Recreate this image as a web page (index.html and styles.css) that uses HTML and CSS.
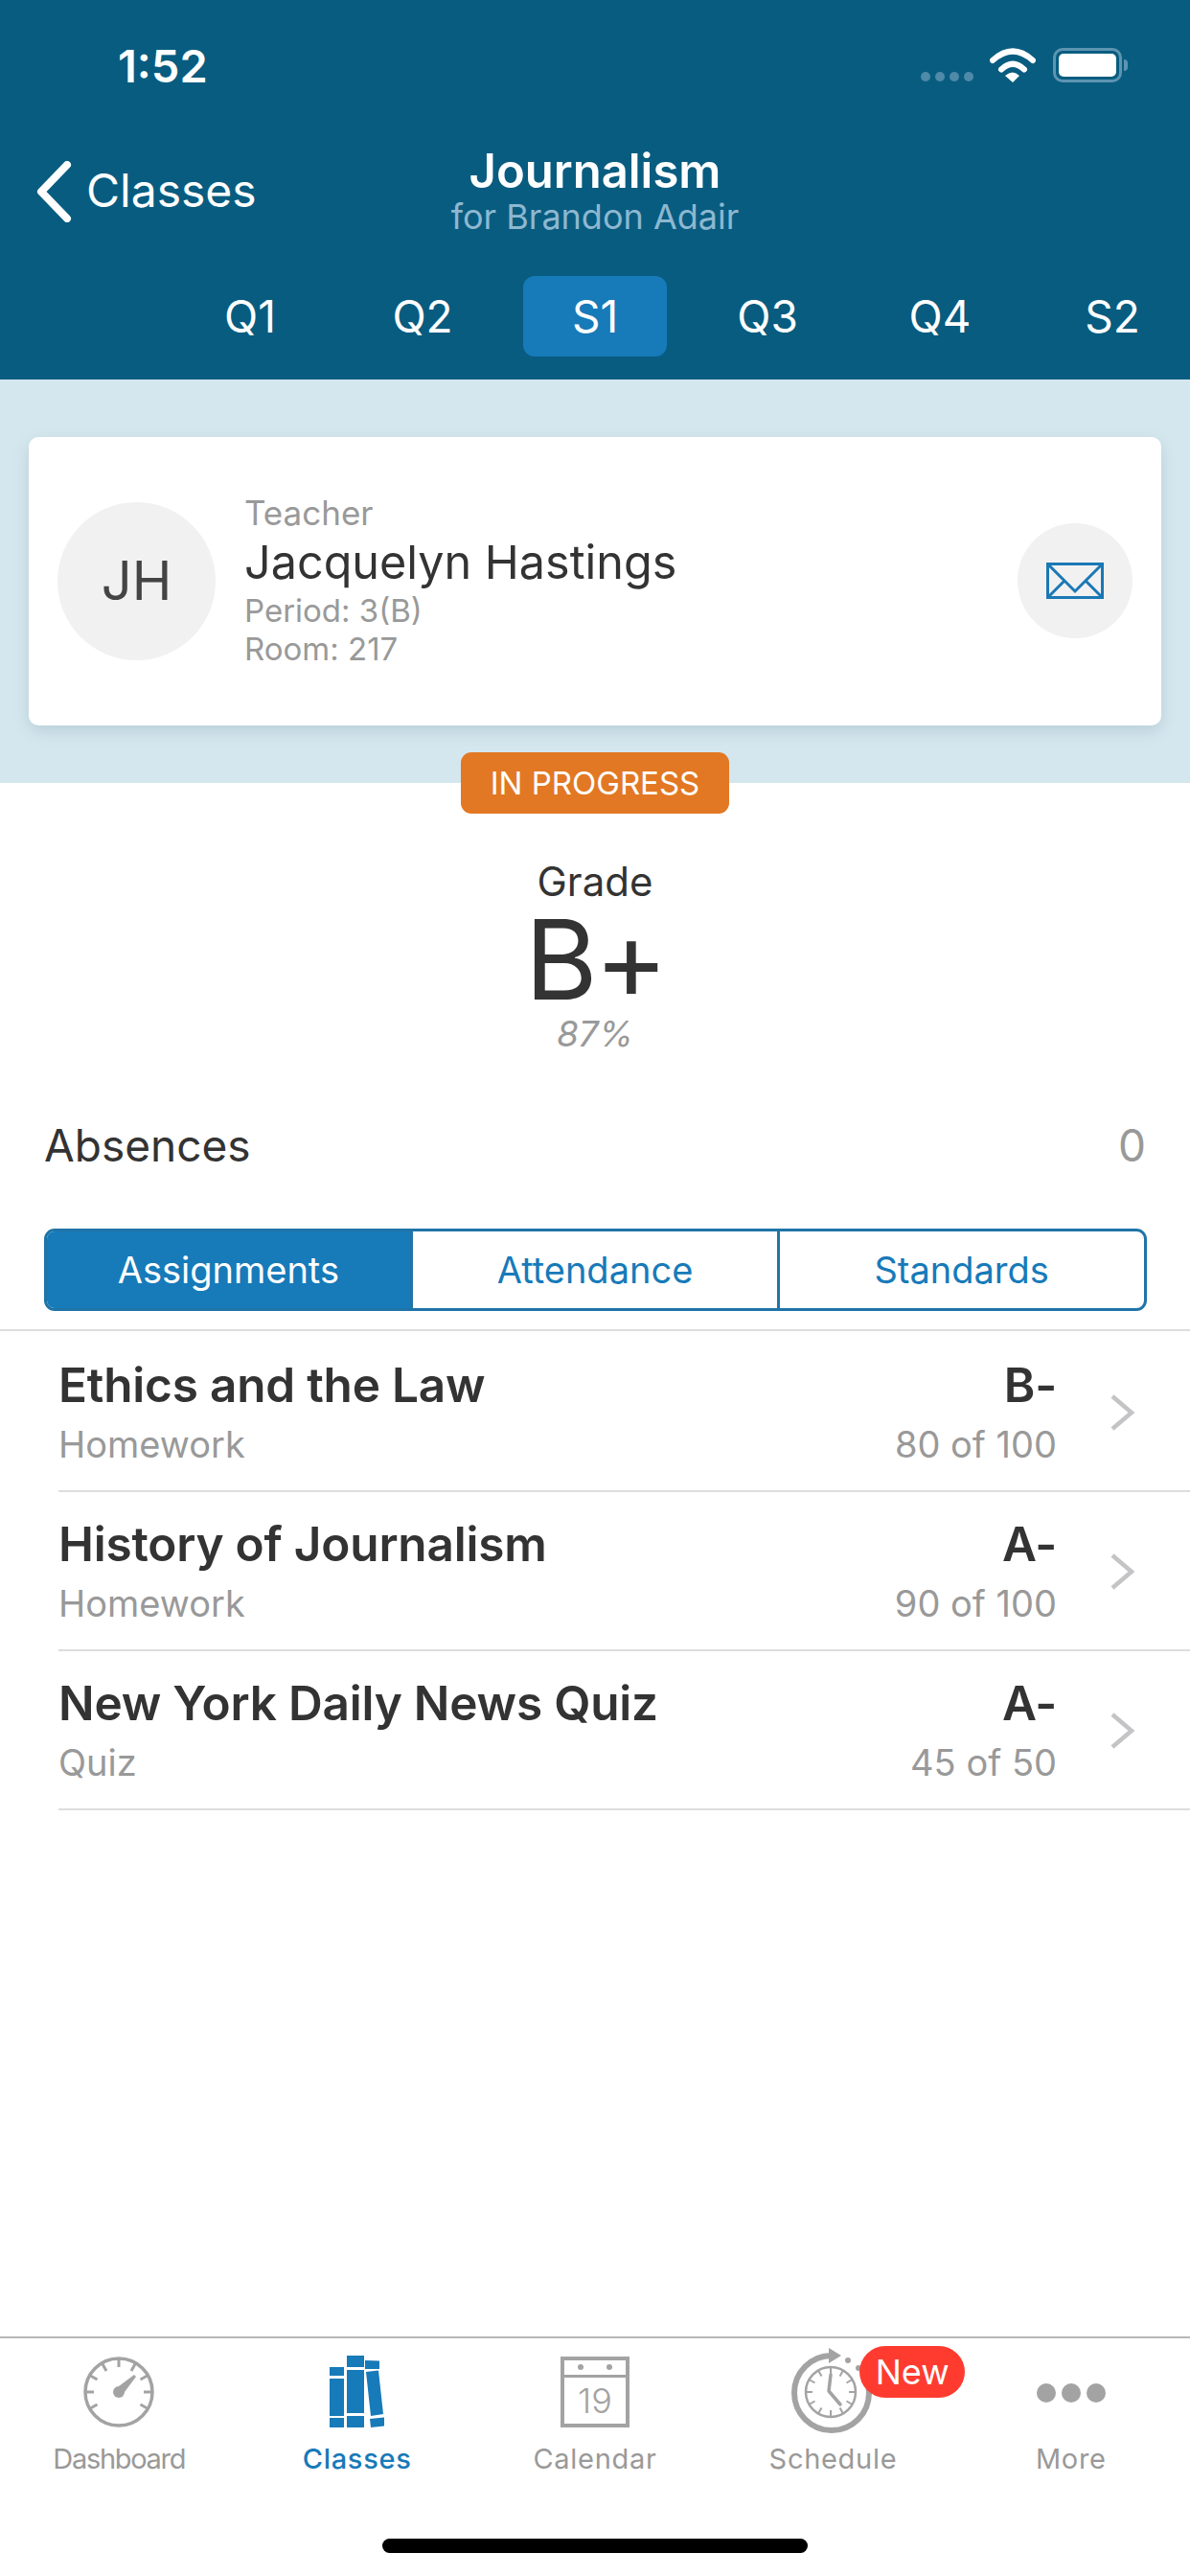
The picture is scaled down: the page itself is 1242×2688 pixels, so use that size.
FILE: index.html
```html
<!DOCTYPE html>
<html lang="en">
  <head>
    <meta charset="UTF-8" />
    <meta name="viewport" content="width=device-width, initial-scale=1.0" />
    <title>Journalism</title>
    <link rel="stylesheet" href="styles.css">
  </head>
  <body>
    <div class="page">
      <div class="header">
        <div class="status">
          <span class="time">1:52</span>
          <div class="status-icons">
            <div class="signal"><i></i><i></i><i></i><i></i></div>
            <svg class="wifi" width="48" height="36" viewBox="0 0 48 36">
              <path d="M3 13Q24 -6 45 13" fill="none" stroke="#fff" stroke-width="6" stroke-linecap="round"/>
              <path d="M12 22.500Q24 11 36 22.500" fill="none" stroke="#fff" stroke-width="6" stroke-linecap="round"/>
              <path d="M16 29Q24 22 31 29L24 36Z" fill="#fff"/>
            </svg>
            <div class="battery"><div class="battery-fill"></div></div>
            <div class="battery-nub"></div>
          </div>
        </div>
        <div class="nav">
          <div class="back">
            <svg width="38" height="64" viewBox="0 0 38 64">
              <path d="M33 4L6 32L33 60" fill="none" stroke="#fff" stroke-width="8" stroke-linecap="round" stroke-linejoin="round"/>
            </svg>
            <span>Classes</span>
          </div>
          <div class="title">
            <div class="title-main">Journalism</div>
            <div class="title-sub">for Brandon Adair</div>
          </div>
        </div>
        <div class="periods">
          <div class="period">Q1</div>
          <div class="period">Q2</div>
          <div class="period active">S1</div>
          <div class="period">Q3</div>
          <div class="period">Q4</div>
          <div class="period">S2</div>
        </div>
      </div>

      <div class="teacher-area">
        <div class="card">
          <div class="avatar">JH</div>
          <div class="teacher-info">
            <div class="teacher-label">Teacher</div>
            <div class="teacher-name">Jacquelyn Hastings</div>
            <div class="teacher-meta">Period: 3(B)</div>
            <div class="teacher-meta">Room: 217</div>
          </div>
          <div class="mail">
            <svg width="60" height="38" viewBox="0 0 60 38">
              <rect x="1.500" y="1.500" width="57" height="35" fill="none" stroke="#1a78b5" stroke-width="3"/>
              <path d="M2 2L30 30L58 2M2 36L19 19M58 36L41 19" fill="none" stroke="#1a78b5" stroke-width="3"/>
            </svg>
          </div>
        </div>
      </div>

      <div class="main">
        <div class="badge">IN PROGRESS</div>
        <div class="grade-label">Grade</div>
        <div class="grade">B+</div>
        <div class="percent">87%</div>
        <div class="absences">
          <span>Absences</span>
          <span class="absences-count">0</span>
        </div>
        <div class="segments">
          <div class="segment active">Assignments</div>
          <div class="segment">Attendance</div>
          <div class="segment">Standards</div>
        </div>

        <div class="list">
          <div class="row">
            <div class="row-left">
              <div class="row-title">Ethics and the Law</div>
              <div class="row-sub">Homework</div>
            </div>
            <div class="row-right">
              <div class="row-title">B-</div>
              <div class="row-sub">80 of 100</div>
            </div>
            <svg class="chevron" width="28" height="40" viewBox="0 0 28 40">
              <path d="M4 3L24 20L4 37" fill="none" stroke="#c4c4c7" stroke-width="4.500"/>
            </svg>
          </div>
          <div class="row">
            <div class="row-left">
              <div class="row-title">History of Journalism</div>
              <div class="row-sub">Homework</div>
            </div>
            <div class="row-right">
              <div class="row-title">A-</div>
              <div class="row-sub">90 of 100</div>
            </div>
            <svg class="chevron" width="28" height="40" viewBox="0 0 28 40">
              <path d="M4 3L24 20L4 37" fill="none" stroke="#c4c4c7" stroke-width="4.500"/>
            </svg>
          </div>
          <div class="row">
            <div class="row-left">
              <div class="row-title">New York Daily News Quiz</div>
              <div class="row-sub">Quiz</div>
            </div>
            <div class="row-right">
              <div class="row-title">A-</div>
              <div class="row-sub">45 of 50</div>
            </div>
            <svg class="chevron" width="28" height="40" viewBox="0 0 28 40">
              <path d="M4 3L24 20L4 37" fill="none" stroke="#c4c4c7" stroke-width="4.500"/>
            </svg>
          </div>
        </div>
      </div>

      <div class="tabbar">
        <div class="tabs">
          <div class="tab">
            <svg width="74" height="76" viewBox="0 0 74 76">
              <circle cx="37" cy="38" r="35" fill="none" stroke="#a3a3a3" stroke-width="3.500"/>
              <path d="M37 3V12M19.500 8L24 16M54.500 8L50 16M6.500 20.500L14.500 25M67.500 20.500L59.500 25M2 38H11M72 38H63M6.500 55.500L14.500 51M67.500 55.500L59.500 51" stroke="#a3a3a3" stroke-width="3"/>
              <circle cx="37" cy="38" r="6" fill="#a3a3a3"/>
              <path d="M33 35L53 20L55 22L40 42Z" fill="#a3a3a3"/>
            </svg>
            <span class="tab-label tab-label-tight">Dashboard</span>
          </div>
          <div class="tab tab-on">
            <svg width="58" height="76" viewBox="0 0 58 76">
              <path d="M0 12H15V21H0ZM0 24H15V63H0ZM0 65H15V75H0ZM18 0H36V12H18ZM18 15H36V60H18ZM18 63H36V75H18Z" fill="#177ab9"/>
              <path d="M37 5L52 5.500L52 14L37 14ZM38 17L51 15.500L56 61L43 63ZM42 66L57 64.500L57 73.500L43 75Z" fill="#177ab9"/>
            </svg>
            <span class="tab-label">Classes</span>
          </div>
          <div class="tab">
            <svg class="cal-icon" width="72" height="74" viewBox="0 0 72 74">
              <rect x="2" y="2" width="68" height="70" fill="none" stroke="#a3a3a3" stroke-width="4"/>
              <path d="M2 20.500H70" stroke="#a3a3a3" stroke-width="3"/>
              <circle cx="21" cy="11" r="3" fill="#a3a3a3"/>
              <circle cx="51" cy="11" r="3" fill="#a3a3a3"/>
              <text x="36" y="59" class="cal-day" text-anchor="middle">19</text>
            </svg>
            <span class="tab-label">Calendar</span>
          </div>
          <div class="tab">
            <svg class="clock-icon" width="90" height="90" viewBox="0 0 90 90">
              <path d="M44 8A39 39 0 1 0 83 47A39 39 0 0 0 78 28" fill="none" stroke="#a3a3a3" stroke-width="6"/>
              <path d="M41 0L54 8L41 16Z" fill="#a3a3a3"/>
              <circle cx="61" cy="13" r="3" fill="#a3a3a3"/>
              <circle cx="72" cy="21" r="3" fill="#a3a3a3"/>
              <circle cx="43" cy="46" r="26" fill="none" stroke="#a3a3a3" stroke-width="2.500"/>
              <path d="M43 20V27M43 72V65M17 46H24M69 46H62M30 23.500L33.500 29.500M56 23.500L52.500 29.500M30 68.500L33.500 62.500M56 68.500L52.500 62.500M20.500 33L26.500 36.500M65.500 33L59.500 36.500M20.500 59L26.500 55.500M65.500 59L59.500 55.500" stroke="#a3a3a3" stroke-width="2"/>
              <path d="M43 28L41 45L53 59" fill="none" stroke="#a3a3a3" stroke-width="3.500" stroke-linecap="round" stroke-linejoin="round"/>
            </svg>
            <span class="tab-label">Schedule</span>
            <span class="tab-new">New</span>
          </div>
          <div class="tab">
            <div class="more-dots"><i></i><i></i><i></i></div>
            <span class="tab-label">More</span>
          </div>
        </div>
        <div class="home-bar"></div>
      </div>
    </div>
  </body>
</html>
```

FILE: styles.css
```css
* {
  box-sizing: border-box;
}
body {
  margin: 0;
  font-family: Inter, "Liberation Sans", sans-serif;
  color: #333;
  background: #fff;
}
.page {
  width: 1242px;
  height: 2688px;
  display: flex;
  flex-direction: column;
  overflow: hidden;
}

/* top bar */
.header {
  height: 396px;
  background: #085c80;
  color: #fff;
  flex-shrink: 0;
}
.status {
  height: 136px;
  display: flex;
  align-items: center;
  justify-content: space-between;
  padding: 0 65px 0 123px;
}
.time {
  font-size: 47px;
  font-weight: 600;
}
.status-icons {
  display: flex;
  align-items: flex-end;
  height: 36px;
}
.signal {
  display: flex;
  gap: 5px;
  margin-right: 17px;
  margin-bottom: 1px;
}
.signal i {
  width: 10px;
  height: 10px;
  border-radius: 50%;
  background: #4f8aa8;
}
.wifi {
  margin-right: 18px;
}
.battery {
  width: 72px;
  height: 36px;
  border: 3px solid #5d95b1;
  border-radius: 10px;
  padding: 3px;
}
.battery-fill {
  height: 100%;
  background: #fff;
  border-radius: 5px;
}
.battery-nub {
  width: 4px;
  height: 12px;
  margin: 0 0 12px 2px;
  background: #5d95b1;
  border-radius: 0 4px 4px 0;
}
.nav {
  height: 138px;
  display: grid;
  grid-template-columns: 1fr auto 1fr;
  align-items: center;
}
.back {
  display: flex;
  align-items: center;
  gap: 15px;
  padding-left: 37px;
  font-size: 48px;
  margin-top: -14px;
}
.back svg {
  margin-top: 3px;
}
.title {
  text-align: center;
  margin-top: -14px;
}
.title-main {
  font-size: 49px;
  font-weight: 600;
  line-height: 56px;
}
.title-sub {
  font-size: 36px;
  line-height: 38px;
  color: #8db8d0;
}
.periods {
  display: flex;
  margin-top: 14px;
  padding-left: 171px;
}
.period {
  flex: 0 0 150px;
  height: 84px;
  margin: 0 15px;
  font-size: 46px;
  line-height: 84px;
  text-align: center;
  border-radius: 12px;
}
.period.active {
  background: #177ab9;
}

/* teacher card */
.teacher-area {
  height: 421px;
  padding: 60px 30px 0;
  background: #d5e7ee;
  flex-shrink: 0;
}
.card {
  height: 301px;
  display: flex;
  align-items: center;
  padding: 0 30px;
  background: #fff;
  border-radius: 10px;
  box-shadow: 0 6px 16px rgba(60, 100, 130, 0.18);
}
.avatar {
  width: 165px;
  height: 165px;
  flex-shrink: 0;
  margin-right: 30px;
  border-radius: 50%;
  background: #f1f1f2;
  color: #444;
  font-size: 56px;
  line-height: 165px;
  text-align: center;
}
.teacher-info {
  flex: 1;
  margin-top: -4px;
}
.teacher-label {
  font-size: 35px;
  line-height: 44px;
  color: #999;
}
.teacher-name {
  font-size: 48.500px;
  line-height: 60px;
}
.teacher-meta {
  font-size: 33px;
  line-height: 40px;
  color: #999;
}
.mail {
  width: 120px;
  height: 120px;
  flex-shrink: 0;
  margin-top: -2px;
  display: flex;
  align-items: center;
  justify-content: center;
  border-radius: 50%;
  background: #f1f1f2;
}

/* grade */
.main {
  flex: 1;
  display: flex;
  flex-direction: column;
  align-items: center;
}
.badge {
  width: 280px;
  height: 64px;
  margin-top: -32px;
  background: #e27823;
  color: #fff;
  border-radius: 11px;
  font-size: 33px;
  line-height: 64px;
  text-align: center;
  position: relative;
}
.grade-label {
  margin-top: 46px;
  font-size: 42px;
  line-height: 50px;
}
.grade {
  font-size: 116px;
  line-height: 112px;
  letter-spacing: -3px;
}
.percent {
  font-size: 37px;
  line-height: 44px;
  font-style: italic;
  color: #999;
}
.absences {
  width: 100%;
  height: 80px;
  margin-top: 54px;
  padding: 0 46px;
  display: flex;
  align-items: center;
  justify-content: space-between;
  font-size: 46px;
}
.absences-count {
  color: #999;
}
.segments {
  width: 1151px;
  height: 86px;
  margin-top: 47px;
  display: flex;
  border: 3px solid #1f74a8;
  border-radius: 11px;
  overflow: hidden;
}
.segment {
  flex: 1;
  font-size: 38px;
  line-height: 80px;
  text-align: center;
  color: #177ab9;
  border-left: 3px solid #1f74a8;
}
.segment:first-child {
  border-left: 0;
}
.segment.active {
  background: #177ab9;
  color: #fff;
}

/* assignments */
.list {
  width: 100%;
  margin-top: 19px;
  padding-top: 2px;
  border-top: 2px solid #ddd;
}
.row {
  height: 166px;
  margin-left: 61px;
  padding: 23px 57px 0 0;
  display: flex;
  border-bottom: 2px solid #ddd;
}
.row-left {
  flex: 1;
}
.row-right {
  text-align: right;
}
.row-title {
  font-size: 49.500px;
  line-height: 62px;
  font-weight: 600;
  letter-spacing: -0.2px;
}
.row-sub {
  font-size: 38px;
  line-height: 62px;
  color: #999;
}
.chevron {
  margin: 40px 0 0 54px;
}

/* bottom tabs */
.tabbar {
  height: 250px;
  flex-shrink: 0;
  border-top: 2px solid #b8b8b8;
  display: flex;
  flex-direction: column;
}
.tabs {
  display: flex;
  padding-top: 10px;
}
.tab {
  flex: 1;
  height: 136px;
  display: flex;
  flex-direction: column;
  align-items: center;
  justify-content: flex-end;
  position: relative;
  color: #999;
}
.tab svg {
  margin: auto 0 12px;
}
.tab svg.cal-icon {
  margin-bottom: 13px;
}
.tab svg.clock-icon {
  margin-bottom: 6px;
}
.tab-on {
  color: #177ab9;
}
.tab-label {
  font-size: 29px;
  line-height: 40px;
  height: 40px;
  letter-spacing: 0.7px;
}
.tab-label-tight {
  letter-spacing: -1.300px;
}
.tab-on .tab-label {
  font-weight: 500;
}
.cal-day {
  font-family: Inter, sans-serif;
  font-size: 36px;
  font-weight: 300;
  fill: #a3a3a3;
}
.tab-new {
  position: absolute;
  top: -2px;
  left: 152px;
  width: 110px;
  height: 54px;
  background: #ff3b30;
  color: #fff;
  border-radius: 27px;
  font-size: 36px;
  line-height: 54px;
  text-align: center;
  letter-spacing: 0;
}
.more-dots {
  display: flex;
  gap: 6px;
  margin: auto 0 39px;
}
.more-dots i {
  width: 20px;
  height: 20px;
  border-radius: 50%;
  background: #a3a3a3;
}
.home-bar {
  width: 444px;
  height: 15px;
  margin: auto auto 24px;
  background: #000;
  border-radius: 8px;
}
```
